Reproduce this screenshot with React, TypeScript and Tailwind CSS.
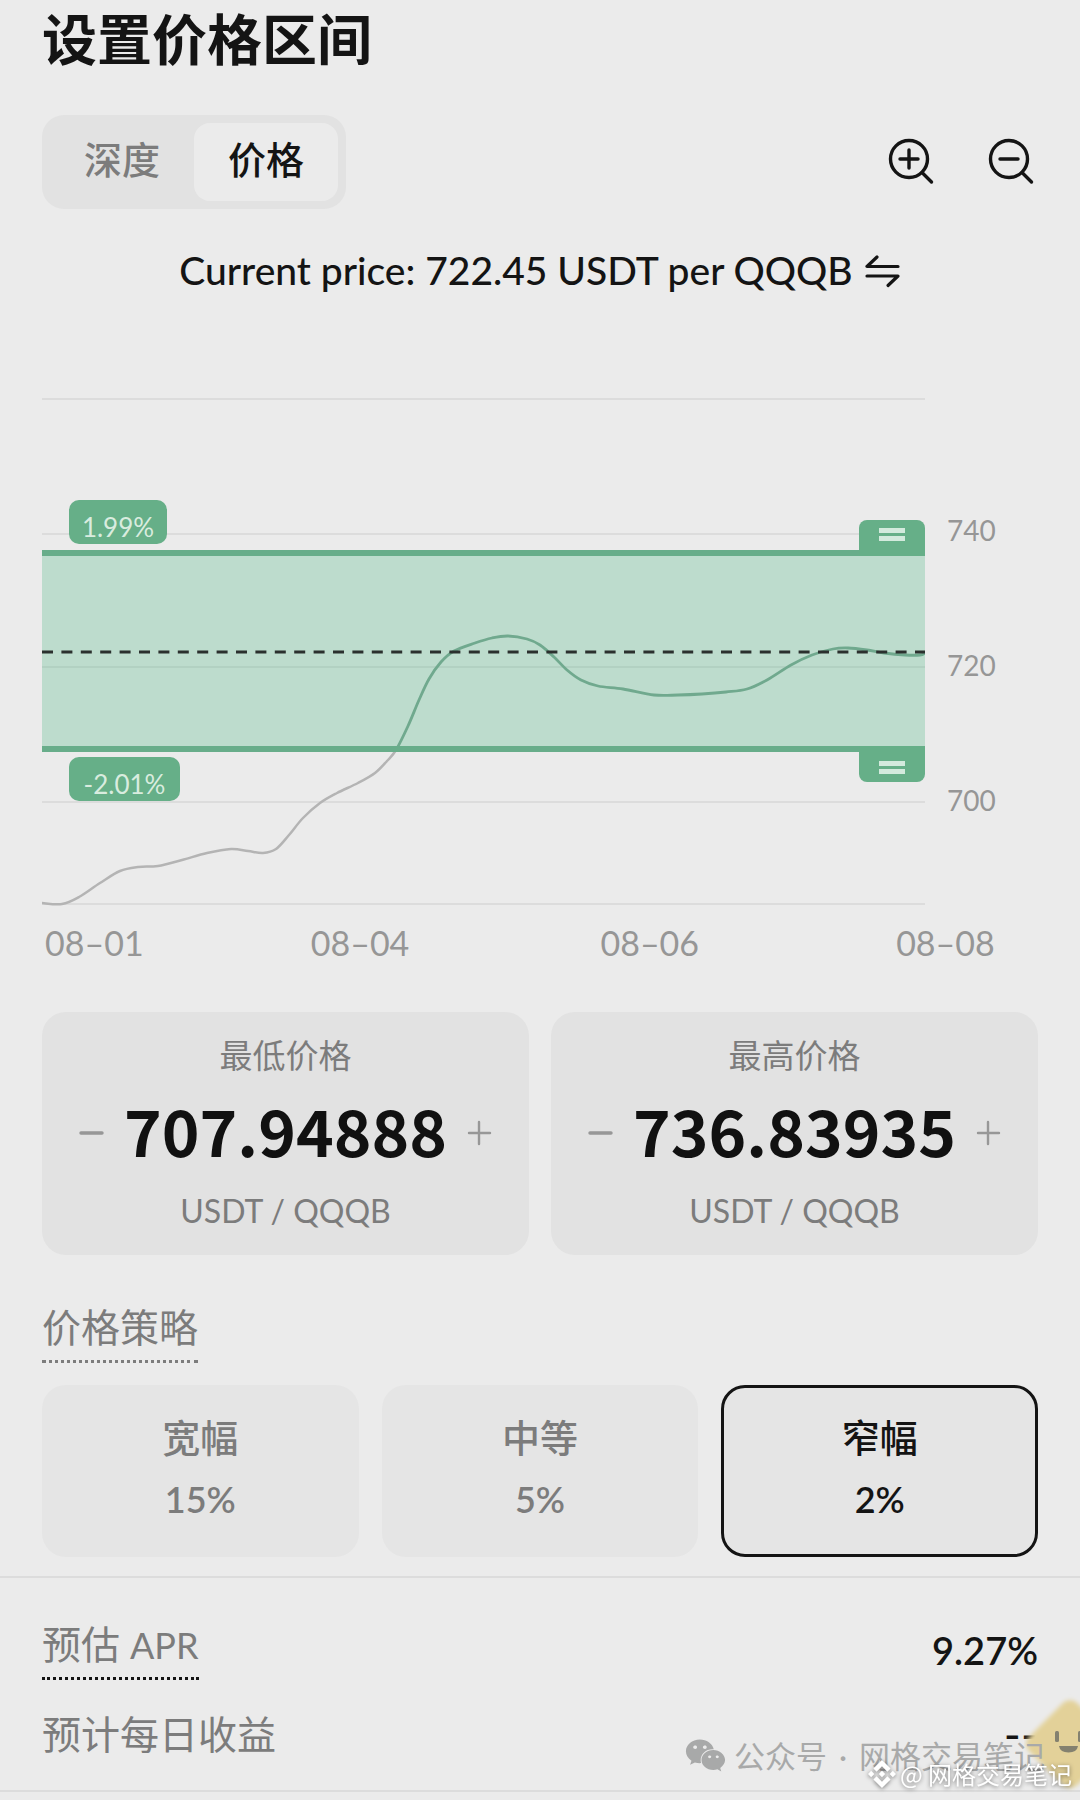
import React, { useState } from "react";
import { FaWeixin } from "react-icons/fa";
import { SiBinance } from "react-icons/si";

const CHART_W = 883;
const CHART_H = 508;

const curvePoints: [number, number][] = [
  [0, 505], [20, 506], [37, 499], [58, 485], [78, 473], [96, 469], [116, 468],
  [140, 462], [165, 455], [189, 451], [206, 453], [221, 455], [234, 451],
  [247, 437], [261, 420], [278, 405], [295, 395], [316, 385], [333, 375],
  [345, 363], [354, 352], [366, 328], [377, 302], [387, 281], [399, 264],
  [412, 253], [433, 245], [450, 240], [466, 238], [485, 241], [498, 247],
  [512, 259], [525, 272], [539, 282], [556, 288], [581, 291], [612, 297],
  [636, 297], [660, 296], [684, 294], [705, 291], [725, 282], [749, 267],
  [770, 257], [791, 251], [806, 250], [825, 252], [842, 255], [863, 257],
  [878, 257], [883, 255],
];

const gridLines = [1, 136, 269, 404, 506];

// Catmull-Rom spline through the points
const toPath = (pts: [number, number][]) => {
  let d = `M${pts[0][0]} ${pts[0][1]}`;
  for (let i = 0; i < pts.length - 1; i++) {
    const p0 = pts[i - 1] || pts[i];
    const p1 = pts[i];
    const p2 = pts[i + 1];
    const p3 = pts[i + 2] || p2;
    d += ` C${p1[0] + (p2[0] - p0[0]) / 6} ${p1[1] + (p2[1] - p0[1]) / 6} ${
      p2[0] - (p3[0] - p1[0]) / 6
    } ${p2[1] - (p3[1] - p1[1]) / 6} ${p2[0]} ${p2[1]}`;
  }
  return d;
};

const ZoomIcon = ({ plus }: { plus?: boolean }) => (
  <svg
    className="w-12 h-12"
    viewBox="0 0 48 48"
    fill="none"
    stroke="currentColor"
    strokeWidth="3.4"
    strokeLinecap="round"
  >
    <circle cx="22" cy="21" r="18.5" />
    <path d="M35 34.5 L44.5 44" />
    <path d="M13 21 H31" />
    {plus && <path d="M22 12 V30" />}
  </svg>
);

const PriceChart = () => {
  const line = toPath(curvePoints);
  return (
    <div>
      <div className="flex h-[508px]">
        <div className="relative flex-1">
          <svg
            className="block w-full h-full"
            viewBox={`0 0 ${CHART_W} ${CHART_H}`}
            preserveAspectRatio="none"
            fill="none"
          >
            <clipPath id="band">
              <rect x="0" y="152" width={CHART_W} height="199" />
            </clipPath>
            {gridLines.map((y) => (
              <path key={y} d={`M0 ${y} H${CHART_W}`} stroke="#dcdcdc" strokeWidth="2" />
            ))}
            <path d={line} stroke="#b4b4b4" strokeWidth="2.5" />
            <rect x="0" y="152" width={CHART_W} height="202" fill="#bddccd" />
            <path d={`M0 269 H${CHART_W}`} stroke="#b2d1c2" strokeWidth="2" />
            <path d={line} stroke="#70a98e" strokeWidth="2.8" clipPath="url(#band)" />
            <path d={`M0 155 H${CHART_W}`} stroke="#68ad8a" strokeWidth="6" />
            <path d={`M0 351 H${CHART_W}`} stroke="#68ad8a" strokeWidth="6" />
            <path
              d={`M0 254 H${CHART_W}`}
              stroke="#2b302e"
              strokeWidth="3"
              strokeDasharray="11 8.4"
            />
          </svg>
          <span className="absolute left-[27px] top-[102px] h-[44px] w-[98px] rounded-[10px] bg-[#66af88] pt-2 text-center text-[26px] leading-[38px] text-[#d9ecdf]">
            1.99%
          </span>
          <span className="absolute left-[27px] top-[359px] h-[44px] w-[111px] rounded-[10px] bg-[#66af88] pt-2 text-center text-[26px] leading-[38px] text-[#d9ecdf]">
            -2.01%
          </span>
          <button
            aria-label="最高价格"
            className="absolute right-0 top-[122px] flex h-9 w-[66px] flex-col items-center gap-[3px] rounded-t-lg bg-[#66af88] pt-2"
          >
            <span className="h-[5px] w-[26px] bg-[#d3eadd]" />
            <span className="h-[5px] w-[26px] bg-[#d3eadd]" />
          </button>
          <button
            aria-label="最低价格"
            className="absolute right-0 top-[348px] flex h-9 w-[66px] flex-col items-center justify-end gap-[3px] rounded-b-lg bg-[#66af88] pb-2"
          >
            <span className="h-[5px] w-[26px] bg-[#d3eadd]" />
            <span className="h-[5px] w-[26px] bg-[#d3eadd]" />
          </button>
        </div>
        <div className="flex w-[113px] flex-col gap-[107px] pl-[22px] pt-[118px] text-[28px] leading-[28px] text-[#969696]">
          <span>740</span>
          <span>720</span>
          <span>700</span>
        </div>
      </div>
      <div className="mt-[17px] grid grid-cols-[266fr_290fr_296fr_142fr] pl-[3px] text-[34px] leading-[40px] text-[#969696]">
        <span>08–01</span>
        <span>08–04</span>
        <span>08–06</span>
        <span>08–08</span>
      </div>
    </div>
  );
};

interface PriceCardProps {
  id: string;
  label: string;
  initial: string;
}

const PriceCard: React.FC<PriceCardProps> = ({ id, label, initial }) => {
  const [value, setValue] = useState(initial);
  const step = (n: number) => setValue((v) => (parseFloat(v) + n).toFixed(5));

  return (
    <div className="flex h-[243px] flex-1 flex-col items-center rounded-3xl bg-[#e2e2e2] pt-[19px] text-[#7c7c7c]">
      <label htmlFor={id} className="text-[33px] leading-[48px]">
        {label}
      </label>
      <div className="mt-2 flex items-center">
        <button aria-label="-" onClick={() => step(-1)} className="text-[#979797]">
          <svg className="h-7 w-7" viewBox="0 0 28 28" stroke="currentColor" strokeWidth="3.4" strokeLinecap="round">
            <path d="M3 15 H24" />
          </svg>
        </button>
        <input
          id={id}
          value={value}
          onChange={(e) => setValue(e.target.value)}
          className="h-[90px] w-[360px] bg-transparent pb-[6px] text-center font-['Noto_Sans_CJK_SC',sans-serif] text-[64px] font-bold leading-[84px] text-[#111] outline-none"
        />
        <button aria-label="+" onClick={() => step(1)} className="text-[#979797]">
          <svg className="h-7 w-7" viewBox="0 0 28 28" stroke="currentColor" strokeWidth="2.4" strokeLinecap="round">
            <path d="M3 15 H24 M13 4 V26" />
          </svg>
        </button>
      </div>
      <span className="text-[32px] leading-[68px]">USDT / QQQB</span>
    </div>
  );
};

const strategies = [
  { name: "宽幅", range: "15%" },
  { name: "中等", range: "5%" },
  { name: "窄幅", range: "2%" },
];

const App: React.FC = () => {
  const [tab, setTab] = useState("价格");
  const [strategy, setStrategy] = useState("窄幅");

  return (
    <div className="relative min-h-screen overflow-hidden bg-[#ebebeb] font-['Lato','Noto_Sans_CJK_SC',sans-serif] text-[#141414]">
      <main className="px-[42px]">
        <h1 className="pt-[7px] text-[55px] font-bold leading-[64px]">设置价格区间</h1>

        <div className="mt-11 flex items-center justify-between">
          <div className="flex rounded-[22px] bg-[#e2e2e2] p-2">
            {["深度", "价格"].map((t) => (
              <button
                key={t}
                onClick={() => setTab(t)}
                className={`h-[78px] w-[144px] rounded-2xl pb-[6px] text-[38px] font-medium ${
                  tab === t ? "bg-[#ebebeb] text-[#141414]" : "text-[#7c7c7c]"
                }`}
              >
                {t}
              </button>
            ))}
          </div>
          <div className="flex gap-[52px] pr-[3px]">
            <button aria-label="放大">
              <ZoomIcon plus />
            </button>
            <button aria-label="缩小">
              <ZoomIcon />
            </button>
          </div>
        </div>

        <div className="mt-[37px] flex items-center justify-center gap-3 text-[39px] font-medium leading-[48px]">
          <span>Current price: 722.45 USDT per QQQB</span>
          <button aria-label="切换">
            <svg
              className="h-9 w-9"
              viewBox="0 0 36 36"
              fill="none"
              stroke="currentColor"
              strokeWidth="3.2"
              strokeLinecap="round"
              strokeLinejoin="round"
            >
              <path d="M12 5 L2 14.5 H33" />
              <path d="M2 24 H33 L23 33.5" />
            </svg>
          </button>
        </div>

        <div className="mt-[104px]">
          <PriceChart />
        </div>

        <div className="mt-[49px] flex gap-[22px]">
          <PriceCard id="min" label="最低价格" initial="707.94888" />
          <PriceCard id="max" label="最高价格" initial="736.83935" />
        </div>

        <h2 className="mt-[48px] inline-block border-b-3 border-dotted border-[#7c7c7c] pb-[9px] text-[39px] leading-[48px] text-[#7c7c7c]">
          价格策略
        </h2>
        <div className="mt-[22px] flex gap-[23px]">
          {strategies.map((s) => (
            <button
              key={s.name}
              onClick={() => setStrategy(s.name)}
              className={`flex h-[172px] flex-1 flex-col items-center rounded-3xl border-3 bg-[#e5e5e5] pt-[25px] text-[38px] leading-[48px] ${
                strategy === s.name ? "border-[#141414] text-[#141414]" : "border-transparent text-[#7c7c7c]"
              }`}
            >
              <span className="font-medium">{s.name}</span>
              <span className="mt-[14px] text-[36px] font-semibold">{s.range}</span>
            </button>
          ))}
        </div>
      </main>

      <dl className="mt-[19px] border-y-2 border-[#dcdcdc] px-[42px] pt-[42px] pb-[32px] text-[39px] leading-[48px]">
        <div className="flex items-start justify-between">
          <dt className="border-b-3 border-dotted border-[#141414] pb-2 text-[#7c7c7c]">
            预估 <span className="text-[36px]">APR</span>
          </dt>
          <dd className="pt-[6px] text-[38px] font-semibold">9.27%</dd>
        </div>
        <div className="mt-[30px] flex items-center justify-between">
          <dt className="text-[#7c7c7c]">预计每日收益</dt>
          <dd className="text-[46px] font-normal">--</dd>
        </div>
      </dl>

      {/* mascot and account marks over the page corner */}
      <svg className="absolute -right-12 bottom-1 h-[104px] w-[104px]" viewBox="0 0 104 104">
        <defs>
          <filter id="soft" x="-20%" y="-20%" width="140%" height="140%">
            <feGaussianBlur stdDeviation="2" />
          </filter>
        </defs>
        <rect x="12" y="18" width="68" height="68" rx="10" transform="rotate(45 46 52)" fill="#e3d199" filter="url(#soft)" />
        <rect x="31" y="39" width="4" height="11" rx="1.5" fill="#84816f" />
        <rect x="54" y="39" width="4" height="11" rx="1.5" fill="#84816f" />
        <path d="M35 54 H54 Q53 60.5 44.5 60.5 Q36 60.5 35 54Z" fill="#84816f" />
      </svg>
      <div className="absolute bottom-[24px] right-[35px] flex items-center gap-2 text-[31px] leading-[40px] text-[#a8a9a9]">
        <FaWeixin className="h-[41px] w-[41px]" />
        <span>
          公众号 <span className="mx-1">·</span> 网格交易笔记
        </span>
      </div>
      <div className="absolute bottom-2 right-2 flex items-center gap-1 font-['Noto_Sans_CJK_SC',sans-serif] text-[24px] leading-[36px] text-white drop-shadow-[0_1px_2px_rgba(0,0,0,0.5)]">
        <SiBinance className="h-7 w-7" />
        <span>@ 网格交易笔记</span>
      </div>
    </div>
  );
};

export default App;
